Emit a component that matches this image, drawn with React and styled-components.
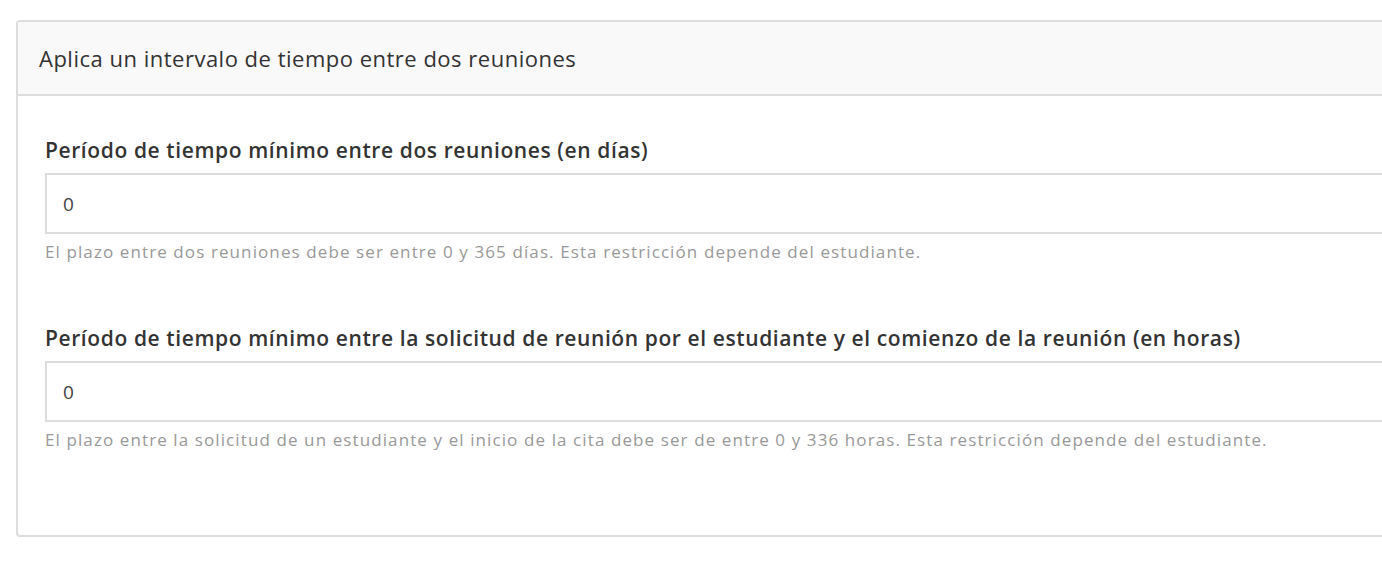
import React from 'react';
import styled, { createGlobalStyle } from 'styled-components';

const GlobalStyle = createGlobalStyle`
    html, body {
        margin: 0;
        padding: 0;
        background: #ffffff;
        overflow: hidden;
    }
    body {
        font-family: "Open Sans", sans-serif;
        color: #333333;
    }
`;

const Page = styled.div`
    padding: 20px 0 0 16px;
`;

const Card = styled.section`
    width: 1420px;
    border: 2px solid #dddddd;
    border-radius: 4px;
    background: #ffffff;
`;

const CardHeader = styled.header`
    height: 72px;
    display: flex;
    align-items: center;
    padding: 0 21px;
    background: #f9f9f9;
    border-bottom: 2px solid #dddddd;
    font-size: 22px;
    letter-spacing: 0.5px;
    font-weight: 400;
    color: #333333;
`;

const CardBody = styled.div`
    padding: 40px 0 84px 27px;
    display: flex;
    flex-direction: column;
    gap: 61px;
`;

const Field = styled.div`
    display: flex;
    flex-direction: column;
`;

const Label = styled.label`
    font-size: 21px;
    letter-spacing: 0.6px;
    font-weight: 600;
    color: #333333;
    line-height: 28px;
    margin-bottom: 9px;
`;

const Input = styled.input`
    box-sizing: border-box;
    height: 61px;
    width: 100%;
    border: 2px solid #dddddd;
    border-radius: 0;
    padding: 0 16px;
    font-family: inherit;
    font-size: 19px;
    color: #444444;
    outline: none;
`;

const Help = styled.p`
    margin: 7px 0 0;
    font-size: 17px;
    letter-spacing: 1.1px;
    line-height: 22px;
    color: #999999;
`;

export default function App() {
    return (
        <Page>
            <GlobalStyle />
            <Card>
                <CardHeader>Aplica un intervalo de tiempo entre dos reuniones</CardHeader>
                <CardBody>
                    <Field>
                        <Label>Período de tiempo mínimo entre dos reuniones (en días)</Label>
                        <Input defaultValue="0" />
                        <Help>
                            El plazo entre dos reuniones debe ser entre 0 y 365 días. Esta restricción depende del estudiante.
                        </Help>
                    </Field>
                    <Field>
                        <Label>
                            Período de tiempo mínimo entre la solicitud de reunión por el estudiante y el comienzo de la reunión (en horas)
                        </Label>
                        <Input defaultValue="0" />
                        <Help>
                            El plazo entre la solicitud de un estudiante y el inicio de la cita debe ser de entre 0 y 336 horas. Esta restricción depende del estudiante.
                        </Help>
                    </Field>
                </CardBody>
            </Card>
        </Page>
    );
}
